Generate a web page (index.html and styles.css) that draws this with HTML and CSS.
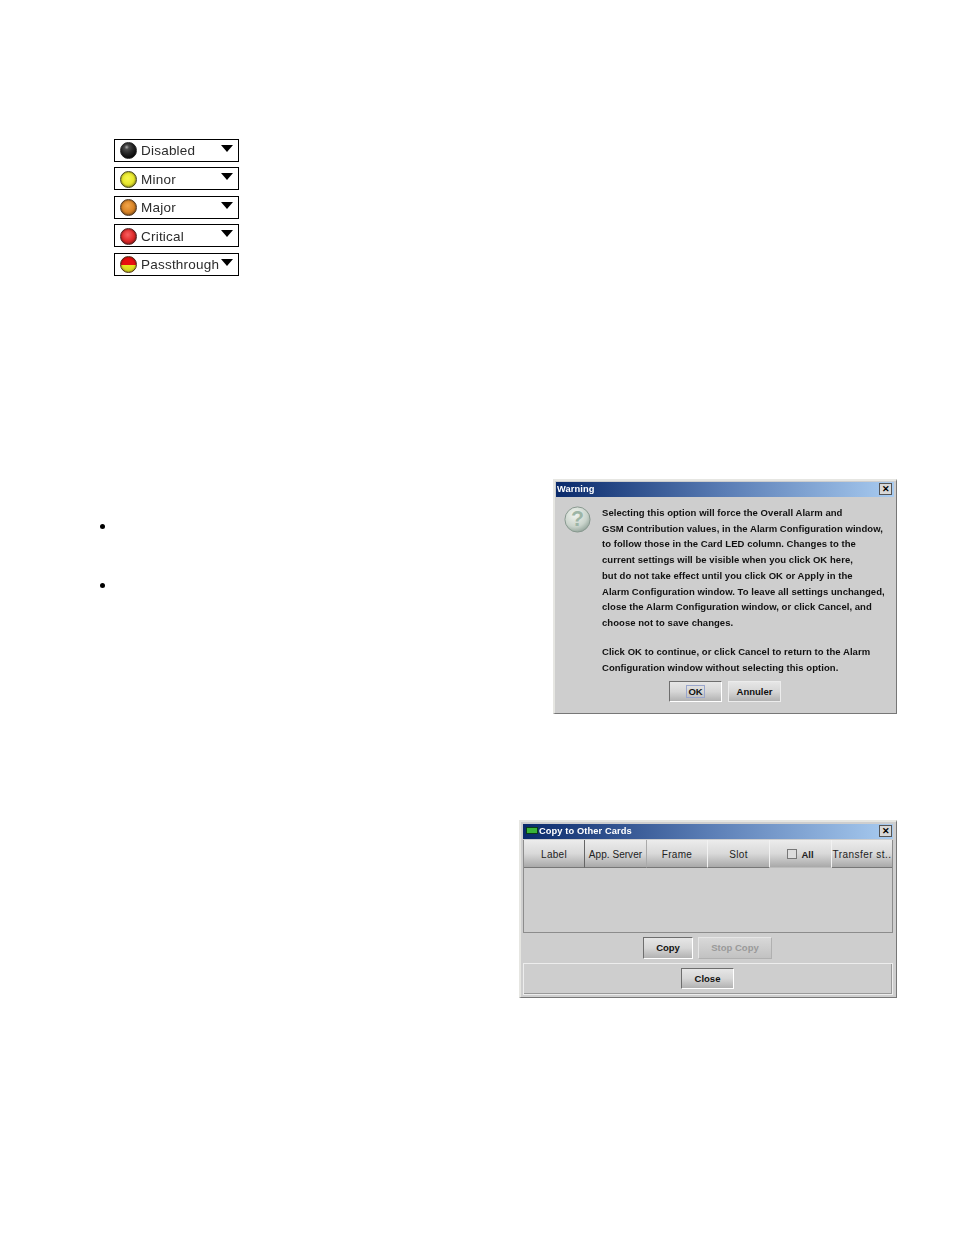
FILE: index.html
```html
<!DOCTYPE html>
<html lang="en">
<head>
<meta charset="utf-8">
<title>Alarm settings</title>
<link rel="stylesheet" href="styles.css">
</head>
<body>
<main class="page">
  <section class="combos">
    <div class="combo"><span class="led led-black"></span><span class="combo-label">Disabled</span><span class="arrow"></span></div>
    <div class="combo"><span class="led led-yellow"></span><span class="combo-label">Minor</span><span class="arrow"></span></div>
    <div class="combo"><span class="led led-orange"></span><span class="combo-label">Major</span><span class="arrow"></span></div>
    <div class="combo"><span class="led led-red"></span><span class="combo-label">Critical</span><span class="arrow"></span></div>
    <div class="combo"><span class="led led-pass"></span><span class="combo-label">Passthrough</span><span class="arrow"></span></div>
  </section>

  <section class="warning-row">
    <ul class="bullets">
      <li class="bullet"></li>
      <li class="bullet"></li>
    </ul>
    <div class="window warning">
      <div class="titlebar"><span class="title">Warning</span><span class="close">✕</span></div>
      <div class="warning-body">
        <svg class="question" viewBox="0 0 30 30" aria-hidden="true">
          <defs><radialGradient id="q" cx="40%" cy="30%" r="75%"><stop offset="0" stop-color="#f2f5f0"/><stop offset="0.65" stop-color="#c9d3cb"/><stop offset="1" stop-color="#8ea096"/></radialGradient></defs>
          <circle cx="15" cy="15" r="13" fill="url(#q)" stroke="#87978e"/>
          <text x="15" y="22" text-anchor="middle" class="question-mark">?</text>
        </svg>
        <div class="message">
          <p>Selecting this option will force the Overall Alarm and<br>GSM Contribution values, in the Alarm Configuration window,<br>to follow those in the Card LED column. Changes to the<br>current settings will be visible when you click OK here,<br>but do not take effect until you click OK or Apply in the<br>Alarm Configuration window. To leave all settings unchanged,<br>close the Alarm Configuration window, or click Cancel, and<br>choose not to save changes.</p>
          <p>Click OK to continue, or click Cancel to return to the Alarm<br>Configuration window without selecting this option.</p>
        </div>
      </div>
      <div class="warning-actions">
        <button class="btn btn-ok" type="button"><span class="focus">OK</span></button>
        <button class="btn btn-annuler" type="button">Annuler</button>
      </div>
    </div>
  </section>

  <section class="copy-row">
    <div class="window copy">
      <div class="titlebar titlebar-copy">
        <span class="app-icon"></span><span class="title">Copy to Other Cards</span><span class="close">✕</span>
      </div>
      <div class="table">
        <div class="thead">
          <div class="th th-label">Label</div>
          <div class="th th-server">App. Server</div>
          <div class="th th-frame">Frame</div>
          <div class="th th-slot">Slot</div>
          <div class="th th-all"><span class="check"></span><b>All</b></div>
          <div class="th th-transfer">Transfer st..</div>
        </div>
      </div>
      <div class="copy-actions">
        <button class="btn btn-copy" type="button">Copy</button>
        <button class="btn btn-stop" type="button" disabled>Stop Copy</button>
      </div>
      <div class="close-panel">
        <button class="btn btn-close" type="button">Close</button>
      </div>
    </div>
  </section>
</main>
</body>
</html>
```
FILE: styles.css
```css
* { box-sizing: border-box; }
html, body { margin: 0; padding: 0; background: #fff; }
body { width: 954px; height: 1235px; overflow: hidden; font-family: "Liberation Sans", Arial, sans-serif; color: #000; }
.page { display: flex; flex-direction: column; }

.combos { display: flex; flex-direction: column; gap: 5.5px; padding: 138.9px 0 0 114px; }
.combo { width: 125px; height: 23px; border: 1px solid #000; background: #fff; display: flex; align-items: center; padding: 1px 0 0 5px; position: relative; }
.led { width: 17px; height: 17px; border-radius: 50%; flex: none; border: 1px solid #222; box-shadow: inset 0 0 2px rgba(0,0,0,.55); }
.led-black { background: radial-gradient(circle at 38% 28%, #b0b0b0 0, #4a4a4a 16%, #262626 45%, #050505 85%); }
.led-yellow { background: radial-gradient(circle at 45% 42%, #f8f850 0, #e6e62c 50%, #8a8a18 100%); border-color: #44441c; }
.led-orange { background: radial-gradient(circle at 45% 38%, #f2a54a 0, #d98426 50%, #7c4a18 100%); border-color: #4c3420; }
.led-red { background: radial-gradient(circle at 45% 38%, #f76060 0, #e02a2a 50%, #801818 100%); border-color: #4c2020; }
.led-pass { background: linear-gradient(#e81010 0, #e81010 52%, #eaea20 52%, #d0d020 100%); border-color: #4a2c10; }
.combo-label { margin-left: 4px; font-size: 13.5px; letter-spacing: 0.22px; color: #2b2b2b; filter: blur(0.3px); }
.arrow { position: absolute; right: 5px; top: 5px; width: 0; height: 0; border-left: 6.5px solid transparent; border-right: 6.5px solid transparent; border-top: 7px solid #000; }

.window { background: #cecece; border-style: solid; border-color: #e6e6e2 #777 #777 #e6e6e2; border-width: 2px 1px 1px 2px; display: flex; flex-direction: column; }
.titlebar { display: flex; align-items: center; background: linear-gradient(90deg, #0a2a6b 0, #5a7db5 50%, #a8cbf0 100%); color: #fff; font-weight: bold; font-size: 9.3px; }
.title { letter-spacing: 0.1px; filter: blur(0.25px); }
.close { width: 13px; height: 12px; margin-left: auto; background: #d8d8d8; border: 1px solid #555; color: #000; font-size: 9px; line-height: 10px; text-align: center; }

.warning-row { display: flex; justify-content: space-between; margin-top: 203.1px; padding-right: 57px; }
.bullets { list-style: none; margin: 0; padding: 45px 0 0 100px; display: flex; flex-direction: column; gap: 54px; }
.bullet { width: 5px; height: 5px; border-radius: 50%; background: #000; }
.warning { width: 344px; height: 235px; padding: 1px 2px 0 1px; }
.warning .titlebar { height: 15px; padding: 0 2px 0 1px; }
.warning .close { margin-right: 0; }
.warning-body { display: flex; padding: 8px 0 0 7px; }
.question { width: 29px; height: 29px; flex: none; }
.question-mark { font-family: "Liberation Sans", sans-serif; font-size: 22px; font-weight: bold; fill: #9db5a6; }
.message { margin-left: 10px; font-size: 9.5px; font-weight: bold; line-height: 15.7px; letter-spacing: 0.05px; white-space: nowrap; color: #111; filter: blur(0.3px); }
.message p { margin: 0 0 13.5px; }
.warning-actions { display: flex; justify-content: center; gap: 6px; margin-top: -8px; }

.btn { font-family: "Liberation Sans", Arial, sans-serif; font-size: 9.5px; font-weight: bold; color: #111; padding: 0; background: linear-gradient(#e6e6e6 0, #d6d6d6 50%, #b2b2b2 100%); border: 1px solid #fff; display: flex; align-items: center; justify-content: center; }
.btn-ok { width: 53px; height: 21px; border-color: #6e6e6e #fff #fff #6e6e6e; }
.focus { border: 1px solid #9aa6cc; padding: 0 1px; line-height: 11px; }
.btn-annuler { width: 53px; height: 21px; border-color: #ececec; }

.copy-row { display: flex; justify-content: flex-end; margin-top: 106px; padding-right: 57px; }
.copy { width: 378px; height: 178px; padding: 2px 3px 2px 2px; }
.titlebar-copy { height: 15px; padding: 0 1px 1px 3px; }
.titlebar-copy .close { margin-bottom: -1px; }
.app-icon { width: 12px; height: 7px; margin-right: 1px; background: #3ab53a; border: 1px solid #0b3d18; }
.table { height: 93px; margin-top: 1px; border: 1px solid #8c8c8c; border-top: 0; }
.thead { display: flex; height: 28px; }
.th { display: flex; align-items: center; justify-content: center; gap: 4px; padding-top: 2px; font-size: 10px; letter-spacing: 0.3px; white-space: nowrap; color: #222; background: linear-gradient(#ececec 0, #d9d9d9 50%, #a9a9a9 100%); border-right: 1px solid #f2f2f2; border-bottom: 1px solid #777; }
.th-label { width: 61px; border-right-color: #666; }
.th-server { width: 62px; border-right-color: #aaa; letter-spacing: 0.05px; }
.th-frame { width: 61px; }
.th-slot { width: 62px; }
.th-all { width: 62px; border-bottom-color: #bbb; letter-spacing: 0; }
.th-all b { font-size: 9.5px; }
.th-transfer { flex: 1; min-width: 0; border-right: 0; letter-spacing: 0.45px; }
.check { width: 10px; height: 10px; border: 1px solid #777; background: #ddd; }
.copy-actions { display: flex; justify-content: center; gap: 5px; padding: 4px 1px 0 0; height: 30px; }
.btn-copy { width: 50px; height: 22px; border-color: #6e6e6e #fff #fff #6e6e6e; }
.btn-stop { width: 74px; height: 22px; color: #9a9a9a; background: linear-gradient(#d8d8d8, #c2c2c2); border-color: #e6e6e6 #b0b0b0 #b0b0b0 #e6e6e6; }
.close-panel { flex: 1; display: flex; justify-content: center; padding: 4px 1px 0 0; border: 1px solid #ededed; box-shadow: inset -1px -1px 0 #999; }
.btn-close { width: 53px; height: 21px; border-color: #6e6e6e #fff #fff #6e6e6e; }
```
